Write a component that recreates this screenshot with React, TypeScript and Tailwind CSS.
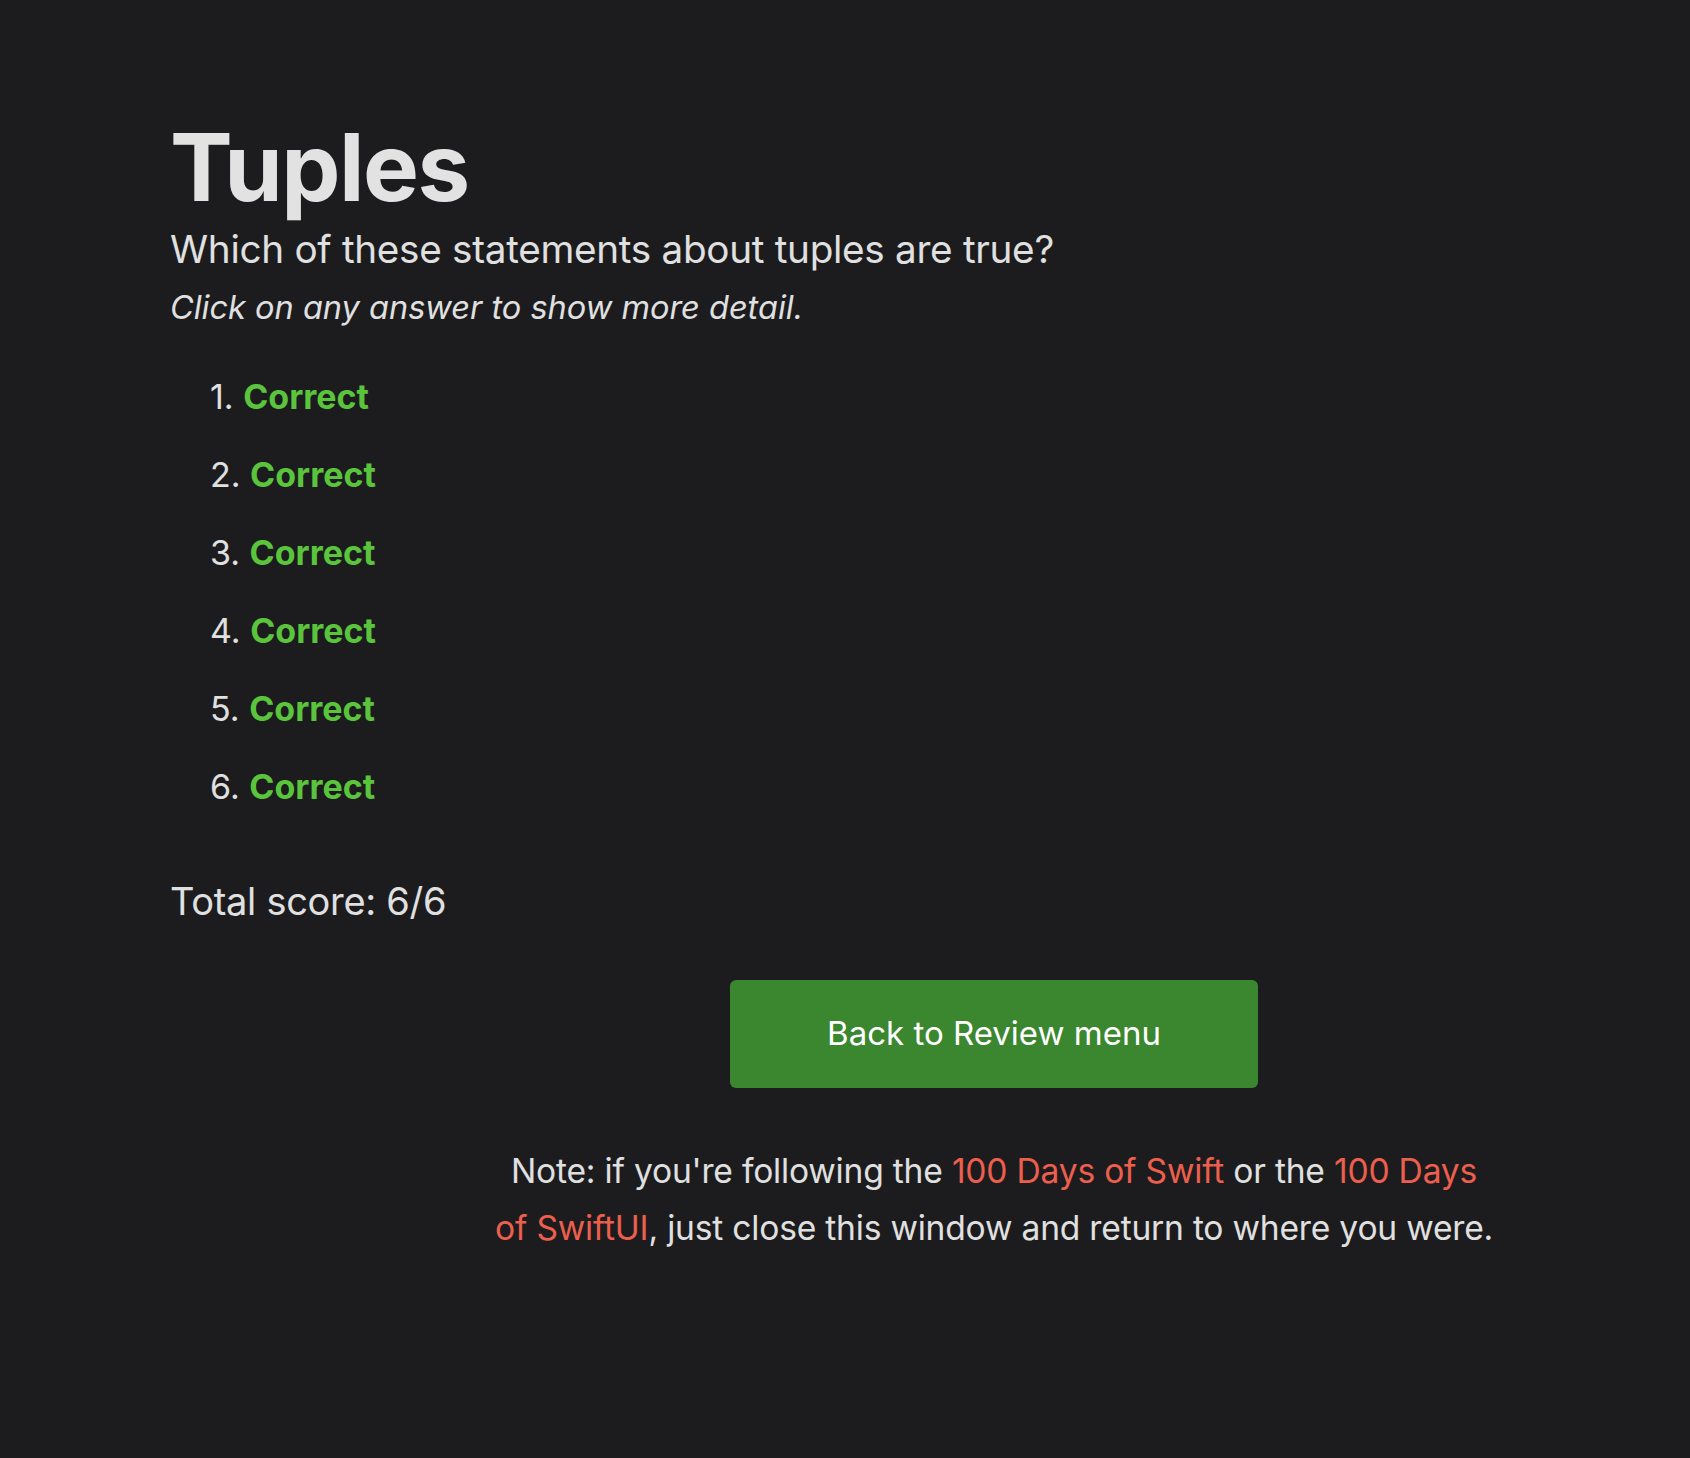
const items = [1, 2, 3, 4, 5, 6];

export default function App() {
  return (
    <div className="min-h-screen bg-[#1c1c1e] text-[#e0e0e0]" style={{ fontFamily: 'Inter, "Noto Sans", sans-serif' }}>
      <div className="pl-[170px] pt-[112px] pb-[200px]">
        <h1 className="text-[94px] font-bold leading-[110px] tracking-[-1.5px] text-[#e2e2e2]">Tuples</h1>
        <p className="text-[38.7px] leading-[50px] mt-[2px] tracking-[-0.3px]">Which of these statements about tuples are true?</p>
        <p className="text-[32.5px] italic leading-[48px] mt-[10px]">Click on any answer to show more detail.</p>

        <ol className="mt-[45px] pl-[40px] flex flex-col gap-[38px]">
          {items.map((n) => (
            <li key={n} className="text-[34px] leading-[40px]">
              <span>{n}. </span>
              <span className="font-bold text-[#5ac43c] cursor-pointer">Correct</span>
            </li>
          ))}
        </ol>

        <p className="text-[38px] leading-[44px] mt-[72px] tracking-[-0.3px]">Total score: 6/6</p>

        <div className="ml-[128px] flex flex-col items-center">
          <button className="mt-[57px] w-[528px] h-[108px] rounded-[6px] bg-[#3a8730] text-white text-[33px]">
            Back to Review menu
          </button>
          <p className="mt-[54px] w-[1060px] text-center text-[33.6px] leading-[57px] tracking-[-0.2px]">
            Note: if you're following the <a className="text-[#ec5f4d]">100 Days of Swift</a> or the{' '}
            <a className="text-[#ec5f4d]">100 Days<br />of SwiftUI</a>, just close this window and return to where you were.
          </p>
        </div>
      </div>
    </div>
  );
}
